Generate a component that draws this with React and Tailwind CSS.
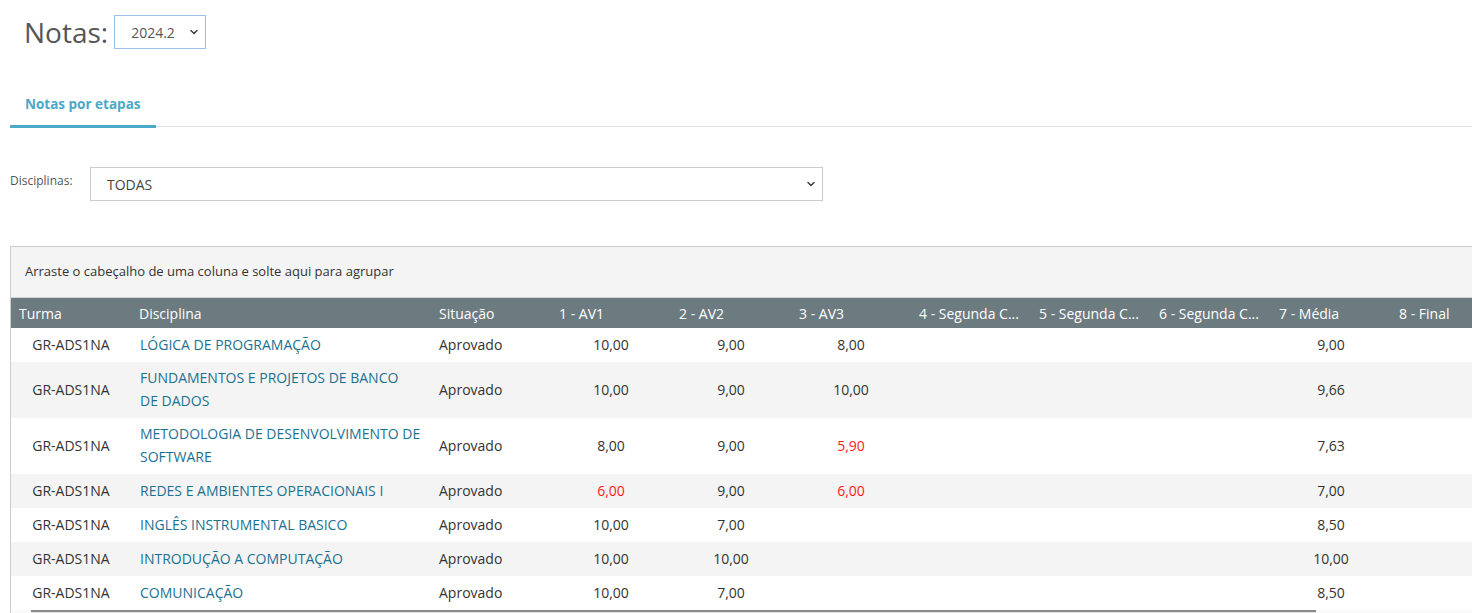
import React from 'react';

const font = { fontFamily: '"Open Sans", "Noto Sans", sans-serif' };

const columns = [
  'Turma',
  'Disciplina',
  'Situação',
  '1 - AV1',
  '2 - AV2',
  '3 - AV3',
  '4 - Segunda C...',
  '5 - Segunda C...',
  '6 - Segunda C...',
  '7 - Média',
  '8 - Final',
];

const rows = [
  { disciplina: ['LÓGICA DE PROGRAMAÇÃO'], notas: ['10,00', '9,00', '8,00'], media: '9,00' },
  { disciplina: ['FUNDAMENTOS E PROJETOS DE BANCO', 'DE DADOS'], notas: ['10,00', '9,00', '10,00'], media: '9,66' },
  { disciplina: ['METODOLOGIA DE DESENVOLVIMENTO DE', 'SOFTWARE'], notas: ['8,00', '9,00', '5,90'], media: '7,63' },
  { disciplina: ['REDES E AMBIENTES OPERACIONAIS I'], notas: ['6,00', '9,00', '6,00'], media: '7,00' },
  { disciplina: ['INGLÊS INSTRUMENTAL BASICO'], notas: ['10,00', '7,00', ''], media: '8,50' },
  { disciplina: ['INTRODUÇÃO A COMPUTAÇÃO'], notas: ['10,00', '10,00', ''], media: '10,00' },
  { disciplina: ['COMUNICAÇÃO'], notas: ['10,00', '7,00', ''], media: '8,50' },
];

const gridCols = 'grid grid-cols-[120px_300px_120px_120px_120px_120px_120px_120px_120px_120px_120px]';

const isRed = (v) => v !== '' && parseFloat(v.replace(',', '.')) < 7;

const Chevron = () => (
  <svg width="10" height="10" viewBox="0 0 10 10" fill="none">
    <path d="M2 3.5 L5 6.5 L8 3.5" stroke="#444" strokeWidth="1.6" strokeLinecap="round" strokeLinejoin="round" />
  </svg>
);

export default function App() {
  return (
    <div className="w-[1472px] overflow-hidden bg-white text-[#333]" style={font}>
      <div className="flex items-center pt-[15px] pl-[24px]">
        <h1 className="text-[28px] leading-[34px] text-[#555]">Notas:</h1>
        <div className="ml-[6px] flex h-[34px] w-[92px] items-center justify-between border border-[#9cc0e4] pl-[16px] pr-[6px] text-[14px] text-[#555]">
          <span>2024.2</span>
          <Chevron />
        </div>
      </div>

      <div className="ml-[10px] mt-[33px] flex border-b border-[#ddd]">
        <div className="-mb-[2px] border-b-[3px] border-[#4aa8c8] px-[15px] pt-[12px] pb-[11px] text-[13.5px] font-bold leading-[20px] text-[#4aa8c8]">
          Notas por etapas
        </div>
      </div>

      <div className="mt-[40px] flex items-start pl-[10px]">
        <span className="w-[80px] pt-[5px] text-[12px] text-[#555]">Disciplinas:</span>
        <div className="flex h-[34px] w-[733px] items-center justify-between border border-[#ccc] pl-[16px] pr-[6px] text-[14px] text-[#444]">
          <span>TODAS</span>
          <Chevron />
        </div>
      </div>

      <div className="mt-[45px] ml-[10px] w-[1520px] border-t border-l border-[#ccc]">
        <div className="flex h-[50px] items-center bg-[#f4f4f4] pl-[14px] text-[13px] text-[#333]">
          Arraste o cabeçalho de uma coluna e solte aqui para agrupar
        </div>
        <div className={`${gridCols} h-[31px] items-center border-t border-[#cfd4d6] bg-[#6c7b7f] text-[14px] text-white`}>
          {columns.map((c) => (
            <div key={c} className="whitespace-nowrap px-[8px]">
              {c}
            </div>
          ))}
        </div>
        {rows.map((r, i) => (
          <div
            key={i}
            className={`${gridCols} min-h-[34px] items-center pt-[4px] pb-[6px] text-[14px] leading-[23px] ${i % 2 === 1 ? 'bg-[#f4f4f4]' : 'bg-white'}`}
          >
            <div className="text-center">GR-ADS1NA</div>
            <div className="px-[9px] text-[#1b7192]">
              {r.disciplina.map((l) => (
                <div key={l} className="whitespace-nowrap">
                  {l}
                </div>
              ))}
            </div>
            <div className="px-[8px]">Aprovado</div>
            {r.notas.map((n, j) => (
              <div key={j} className={`text-center ${isRed(n) ? 'text-[#ff1a1a]' : ''}`}>
                {n}
              </div>
            ))}
            <div />
            <div />
            <div />
            <div className="text-center">{r.media}</div>
            <div />
          </div>
        ))}
        <div className="flex h-[17px] items-start bg-[#fafafa]">
          <div className="ml-[20px] h-[12px] w-[1285px] border-t-2 border-[#8a8a8a] bg-[#e4e4e4]" />
        </div>
      </div>
    </div>
  );
}
